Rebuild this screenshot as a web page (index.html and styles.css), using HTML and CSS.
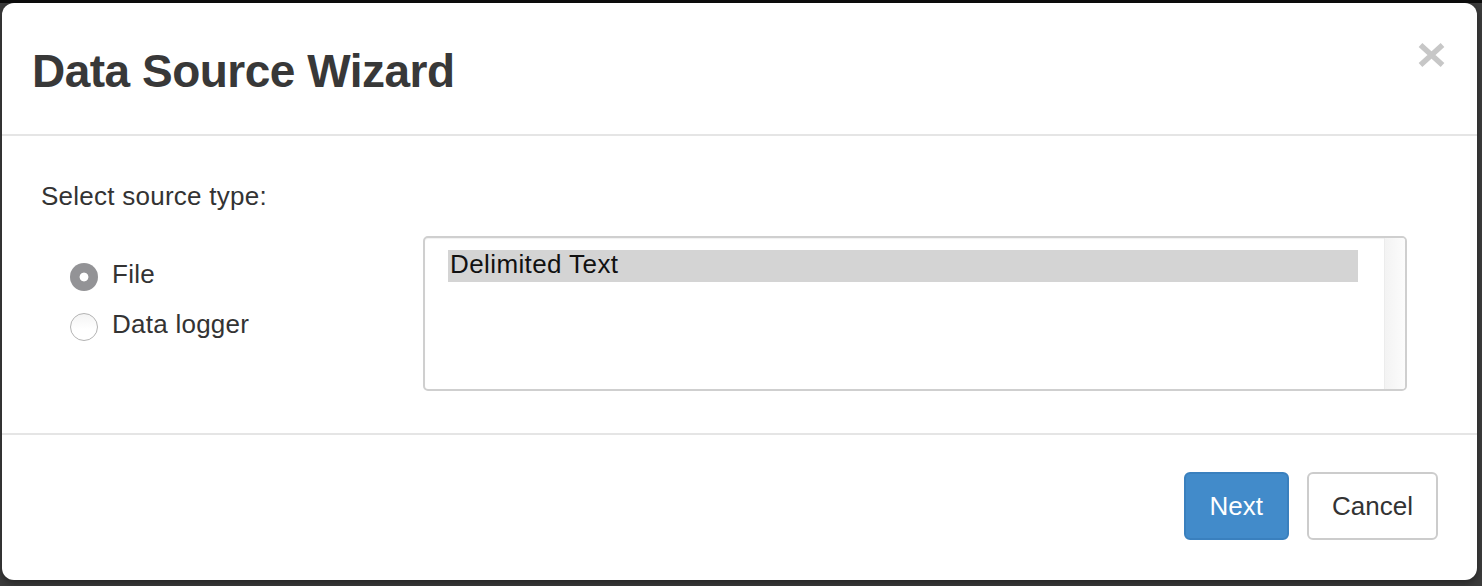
FILE: index.html
```html
<!DOCTYPE html>
<html lang="en">
<head>
<meta charset="utf-8">
<title>Data Source Wizard</title>
<link rel="stylesheet" href="styles.css">
</head>
<body>
<div class="backdrop">
  <div class="modal">
    <div class="modal-header">
      <h3 class="modal-title">Data Source Wizard</h3>
      <button class="close" type="button" aria-label="Close">
        <svg width="29" height="26" viewBox="0 0 29 26"><path d="M3.5 3 L25.5 23 M25.5 3 L3.5 23" stroke="#c7c7c7" stroke-width="5.5" fill="none"/></svg>
      </button>
    </div>
    <div class="modal-body">
      <div class="field-label">Select source type:</div>
      <div class="source-row">
        <div class="radios">
          <label class="radio-row"><input type="radio" name="src" class="radio" checked><span>File</span></label>
          <label class="radio-row"><input type="radio" name="src" class="radio"><span>Data logger</span></label>
        </div>
        <div class="listbox">
          <div class="options">
            <div class="option selected">Delimited Text</div>
          </div>
          <div class="scrolltrack"></div>
        </div>
      </div>
    </div>
    <div class="modal-footer">
      <button class="btn btn-primary" type="button">Next</button>
      <button class="btn btn-default" type="button">Cancel</button>
    </div>
  </div>
</div>
</body>
</html>
```

FILE: styles.css
```css
html, body {
  margin: 0;
  padding: 0;
}
body {
  font-family: "Liberation Sans", Arial, sans-serif;
  color: #333;
  background: #3c3c3c;
}
.backdrop {
  height: 586px;
  box-sizing: border-box;
  padding: 3px 5px 6px 2px;
  background: linear-gradient(#0d0d0d 0 3px, #3c3c3c 3px);
}
.modal {
  height: 577px;
  background: #fff;
  border-radius: 12px;
  display: flex;
  flex-direction: column;
  box-shadow: 0 3px 8px rgba(0, 0, 0, 0.4);
}
.modal-header {
  display: flex;
  justify-content: space-between;
  align-items: flex-start;
  padding: 43px 31px 38px 30px;
  border-bottom: 2px solid #e5e5e5;
}
.modal-title {
  margin: 0;
  font-size: 46px;
  line-height: 50px;
  font-weight: bold;
  letter-spacing: -0.5px;
  color: #383838;
}
.close {
  margin-top: -4px;
  padding: 0;
  border: 0;
  background: none;
  width: 29px;
  height: 26px;
  display: block;
}
.close svg {
  display: block;
}
.modal-body {
  padding: 45px 70px 42px 39px;
  border-bottom: 2px solid #e5e5e5;
  font-size: 26px;
  letter-spacing: 0.25px;
}
.field-label {
  line-height: 30px;
  margin-bottom: 25px;
}
.source-row {
  display: grid;
  grid-template-columns: 382px 1fr;
}
.radios {
  padding-top: 13px;
  padding-left: 29px;
}
.radio-row {
  display: flex;
  align-items: flex-start;
  line-height: 50px;
  height: 50px;
}
.radio {
  appearance: none;
  -webkit-appearance: none;
  margin: 14px 14px 0 0;
  width: 28px;
  height: 28px;
  border-radius: 50%;
  box-sizing: border-box;
  border: 1.5px solid #b3b3b3;
  background: linear-gradient(#f4f4f4, #ffffff 60%);
  flex: none;
}
.radio:checked {
  border: 0;
  background: radial-gradient(circle, #ffffff 0 4px, #939396 4.8px);
}
.listbox {
  height: 155px;
  box-sizing: border-box;
  border: 2px solid #cfcfcf;
  border-radius: 5px;
  display: flex;
  box-shadow: inset 0 1px 1px rgba(0, 0, 0, 0.06);
  overflow: hidden;
}
.options {
  flex: 1;
  padding: 12px 26px 0 23px;
}
.option {
  line-height: 29px;
  padding: 0 4px 3px 2px;
  color: #111;
  letter-spacing: 0.4px;
}
.option.selected {
  background: #d4d4d4;
}
.scrolltrack {
  width: 20px;
  border-left: 1px solid #ececec;
  background: linear-gradient(90deg, #f3f3f3, #fcfcfc);
}
.modal-footer {
  flex: 1;
  display: flex;
  justify-content: flex-end;
  align-items: flex-start;
  gap: 18px;
  padding: 37px 39px 0 0;
}
.btn {
  font-family: "Liberation Sans", Arial, sans-serif;
  font-size: 26px;
  line-height: 30px;
  padding: 17px 24px;
  border-radius: 6px;
  border: 2px solid transparent;
  cursor: pointer;
}
.btn-primary {
  background: #428bca;
  border-color: #3a80be;
  color: #fff;
  padding: 17px 24px;
}
.btn-default {
  background: #fff;
  border-color: #cccccc;
  color: #333;
  padding: 17px 23px;
}
```
